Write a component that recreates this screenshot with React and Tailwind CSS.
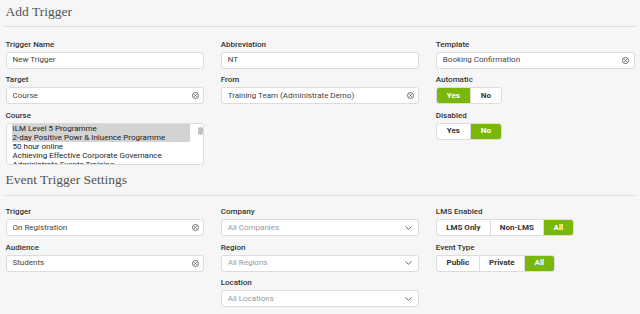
import React from "react";

const Label = ({ children }) => (
  <div className="h-[12px] leading-[12px] text-[8px] font-medium text-[#333] mb-[1px] whitespace-nowrap">
    {children}
  </div>
);

const ClearIcon = () => (
  <svg width="7" height="7" viewBox="0 0 14 14" className="shrink-0">
    <circle cx="7" cy="7" r="6" fill="none" stroke="#555" strokeWidth="1.7" />
    <path d="M4.6 4.6 L9.4 9.4 M9.4 4.6 L4.6 9.4" stroke="#555" strokeWidth="1.7" />
  </svg>
);

const Chevron = () => (
  <svg width="7" height="4" viewBox="0 0 7 4" className="shrink-0">
    <polyline points="0.5,0.5 3.5,3.3 6.5,0.5" fill="none" stroke="#666" strokeWidth="1" />
  </svg>
);

const Input = ({ value, placeholder, clear, chevron }) => (
  <div className="h-[17px] bg-white border border-[#dcdcdc] rounded-[3px] flex items-center pl-[6px] pr-[4.5px] text-[8px] leading-[10px]">
    <span className={"flex-1 truncate " + (value ? "text-[#444]" : "text-[#9a9a9a]")}>
      {value || placeholder}
    </span>
    {clear && <ClearIcon />}
    {chevron && (
      <span className="pr-[2px]">
        <Chevron />
      </span>
    )}
  </div>
);

const Field = ({ label, children }) => (
  <div>
    <Label>{label}</Label>
    {children}
  </div>
);

const Group = ({ items, active }) => (
  <div className="flex h-[17px] w-fit rounded-[3px] border border-[#dcdcdc] bg-white overflow-hidden text-[8px] font-bold">
    {items.map(([t, w], i) => (
      <div
        key={t}
        style={{ width: w }}
        className={
          "flex items-center justify-center " +
          (i > 0 ? "border-l border-[#dcdcdc] " : "") +
          (i === active ? "bg-[#79b70a] text-white" : "text-[#333]")
        }
      >
        {t}
      </div>
    ))}
  </div>
);

const Heading = ({ children }) => (
  <div className="px-[5.5px] text-[13.5px] leading-[18px] text-[#555] font-['Liberation_Serif',serif]">
    {children}
  </div>
);

const Hr = () => <div className="mx-[5px] h-px bg-[#dcdcdc]" />;

const courses = [
  ["ILM Level 5 Programme", true],
  ["2-day Positive Powr & Inluence Programme", true],
  ["50 hour online", false],
  ["Achieving Effective Corporate Governance", false],
  ["Administrate Events Training", false],
];

export default function App() {
  return (
    <div className="min-h-screen bg-[#f6f6f6] font-['Roboto',sans-serif] pt-[3px]">
      <Heading>Add Trigger</Heading>
      <div className="mt-[5px]">
        <Hr />
      </div>
      <div className="grid grid-cols-3 gap-x-[16.5px] px-[5.5px] pt-[11.5px]">
        <div className="flex flex-col gap-[5.5px]">
          <Field label="Trigger Name">
            <Input value="New Trigger" />
          </Field>
          <Field label="Target">
            <Input value="Course" clear />
          </Field>
          <Field label="Course">
            <div className="h-[42.5px] bg-white border border-[#dcdcdc] rounded-[3px] flex pl-[5px] overflow-hidden">
              <div className="flex-1 pt-[0.5px] overflow-hidden text-[8px] leading-[9px] text-[#222]">
                {courses.map(([c, s]) => (
                  <div key={c} className={"px-[1px] whitespace-nowrap h-[9px] " + (s ? "bg-[#d3d3d3]" : "")}>
                    {c}
                  </div>
                ))}
              </div>
              <div className="w-[13.5px] shrink-0">
                <div className="ml-[8px] mt-[3px] w-[5px] h-[8px] rounded-full bg-[#c1c1c1]" />
              </div>
            </div>
          </Field>
        </div>
        <div className="flex flex-col gap-[5.5px]">
          <Field label="Abbreviation">
            <Input value="NT" />
          </Field>
          <Field label="From">
            <Input value="Training Team (Administrate Demo)" clear />
          </Field>
        </div>
        <div className="flex flex-col gap-[5.5px]">
          <Field label="Template">
            <Input value="Booking Confirmation" clear />
          </Field>
          <Field label="Automatic">
            <Group items={[["Yes", 33], ["No", 31]]} active={0} />
          </Field>
          <Field label="Disabled">
            <Group items={[["Yes", 33], ["No", 31]]} active={1} />
          </Field>
        </div>
      </div>

      <div className="mt-[6px]">
        <Heading>Event Trigger Settings</Heading>
      </div>
      <div className="mt-[5.5px]">
        <Hr />
      </div>
      <div className="grid grid-cols-3 gap-x-[16.5px] px-[5.5px] pt-[10.5px]">
        <div className="flex flex-col gap-[5.5px]">
          <Field label="Trigger">
            <Input value="On Registration" clear />
          </Field>
          <Field label="Audience">
            <Input value="Students" clear />
          </Field>
        </div>
        <div className="flex flex-col gap-[5.5px]">
          <Field label="Company">
            <Input placeholder="All Companies" chevron />
          </Field>
          <Field label="Region">
            <Input placeholder="All Regions" chevron />
          </Field>
          <Field label="Location">
            <Input placeholder="All Locations" chevron />
          </Field>
        </div>
        <div className="flex flex-col gap-[5.5px]">
          <Field label="LMS Enabled">
            <Group items={[["LMS Only", 53], ["Non-LMS", 53], ["All", 30]]} active={2} />
          </Field>
          <Field label="Event Type">
            <Group items={[["Public", 42], ["Private", 45], ["All", 30]]} active={2} />
          </Field>
        </div>
      </div>
    </div>
  );
}
